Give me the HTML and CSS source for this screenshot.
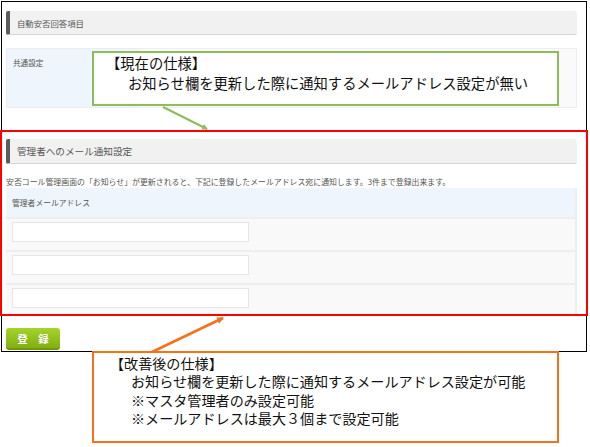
FILE: index.html
```html
<!DOCTYPE html>
<html lang="ja">
<head>
<meta charset="utf-8">
<title>管理者へのメール通知設定</title>
<link rel="stylesheet" href="styles.css">
</head>
<body>
<div class="frame">
  <div class="sec-head sec-head-1">自動安否回答項目</div>
  <div class="tbl1">
    <div class="lbl">共通設定</div>
    <div class="val"></div>
  </div>
  <div class="sec-head sec-head-2">管理者へのメール通知設定</div>
  <p class="desc">安否コール管理画面の「お知らせ」が更新されると、下記に登録したメールアドレス宛に通知します。3件まで登録出来ます。</p>
  <div class="tbl2">
    <div class="th">管理者メールアドレス</div>
    <div class="row"><div class="inp"></div></div>
    <div class="row"><div class="inp"></div></div>
    <div class="row"><div class="inp"></div></div>
  </div>
  <div class="btn">登 録</div>
</div>

<div class="red-box"></div>

<div class="callout callout-green">
  <div class="c-title">【現在の仕様】</div>
  <div class="c-line">お知らせ欄を更新した際に通知するメールアドレス設定が無い</div>
</div>

<div class="callout callout-orange">
  <div class="c-title">【改善後の仕様】</div>
  <div class="c-line">お知らせ欄を更新した際に通知するメールアドレス設定が可能</div>
  <div class="c-line">※マスタ管理者のみ設定可能</div>
  <div class="c-line">※メールアドレスは最大３個まで設定可能</div>
</div>

<svg class="arrows" width="590" height="447" viewBox="0 0 590 447">
  <defs>
    <marker id="ag" markerWidth="6" markerHeight="6" refX="5" refY="3" orient="auto" markerUnits="userSpaceOnUse">
      <path d="M0,0 L6,3 L0,6 Z" fill="#8fbc5a"/>
    </marker>
    <marker id="ao" markerWidth="7" markerHeight="7" refX="6" refY="3.5" orient="auto" markerUnits="userSpaceOnUse">
      <path d="M0,0 L7,3.5 L0,7 Z" fill="#f5711a"/>
    </marker>
  </defs>
  <line x1="163" y1="107" x2="207" y2="129" stroke="#8fbc5a" stroke-width="2" marker-end="url(#ag)"/>
  <line x1="152" y1="352" x2="223" y2="318" stroke="#f5711a" stroke-width="2.5" marker-end="url(#ao)"/>
</svg>
</body>
</html>
```

FILE: styles.css
```css
html, body {
  margin: 0;
  padding: 0;
  background: #fff;
}
body {
  width: 590px;
  height: 447px;
  overflow: hidden;
  font-family: "Noto Sans CJK JP", "Noto Sans", sans-serif;
  color: #555;
}
.frame {
  box-sizing: border-box;
  width: 586px;
  margin: 1px 0 0 1px;
  border: 1px solid #000;
  padding: 0 9px 1px 4px;
  display: flex;
  flex-direction: column;
}
.sec-head {
  box-sizing: border-box;
  background: #f1f1f1;
  border-left: 4px solid #5c5c5c;
  border-bottom: 1px solid #d6d6d6;
  border-radius: 2px;
  padding-left: 7px;
  display: flex;
  align-items: center;
  color: #555;
}
.sec-head-1 {
  margin-top: 9px;
  height: 24px;
  font-size: 8.4px;
}
.sec-head-2 {
  margin-top: 31px;
  height: 25px;
  font-size: 9.6px;
}
.tbl1 {
  margin-top: 13px;
  height: 60px;
  display: flex;
  border: 1px solid #eee;
  box-sizing: border-box;
}
.lbl {
  width: 133px;
  background: #eef5fc;
  font-size: 7.6px;
  line-height: 10px;
  padding: 9px 6px;
  box-sizing: border-box;
  color: #555;
}
.val {
  flex: 1;
  background: #fafafa;
}
.desc {
  margin: 11px 0 0 0;
  height: 13px;
  line-height: 13px;
  font-size: 7.9px;
  color: #555;
  white-space: nowrap;
}
.tbl2 {
  display: flex;
  flex-direction: column;
  border-right: 2px solid #eee;
}
.th {
  height: 29px;
  line-height: 29px;
  background: #eef5fc;
  font-size: 7.8px;
  padding-left: 6px;
  color: #555;
}
.row {
  box-sizing: border-box;
  height: 33px;
  background: #f9f9f9;
  border-top: 2px solid #eeeeee;
  padding: 3px 0 0 6px;
}
.inp {
  box-sizing: border-box;
  width: 237px;
  height: 20px;
  background: #fff;
  border: 1px solid #e6e6e6;
}
.btn {
  margin-top: 12px;
  width: 54px;
  height: 22px;
  box-sizing: border-box;
  border-radius: 3px;
  background: linear-gradient(#a6d32b, #80b012);
  border-bottom: 2px solid #6c9a0a;
  color: #fff;
  font-weight: bold;
  font-size: 10.5px;
  letter-spacing: 4px;
  display: flex;
  align-items: center;
  justify-content: center;
  padding-left: 4px;
  text-shadow: 0 0 1px rgba(0,0,0,0.15);
}
.red-box {
  position: absolute;
  left: 0;
  top: 130px;
  width: 588px;
  height: 186px;
  box-sizing: border-box;
  border: 2px solid #ff0000;
}
.callout {
  position: absolute;
  left: 92px;
  width: 467px;
  box-sizing: border-box;
  background: #fff;
  color: #111;
  font-family: "Noto Sans CJK JP", sans-serif;
}
.callout-green {
  top: 51px;
  height: 55px;
  border: 2px solid #8fbc5a;
  padding: 0 0 0 12px;
  line-height: 20px;
  font-size: 14.3px;
}
.callout-green .c-line {
  padding-left: 22px;
}
.callout-orange {
  top: 351px;
  height: 92px;
  border: 2px solid #f5711a;
  padding: 1px 0 0 16px;
  line-height: 18.3px;
  font-size: 14.1px;
}
.callout-orange .c-line {
  padding-left: 21px;
}
.arrows {
  position: absolute;
  left: 0;
  top: 0;
  pointer-events: none;
}
```
